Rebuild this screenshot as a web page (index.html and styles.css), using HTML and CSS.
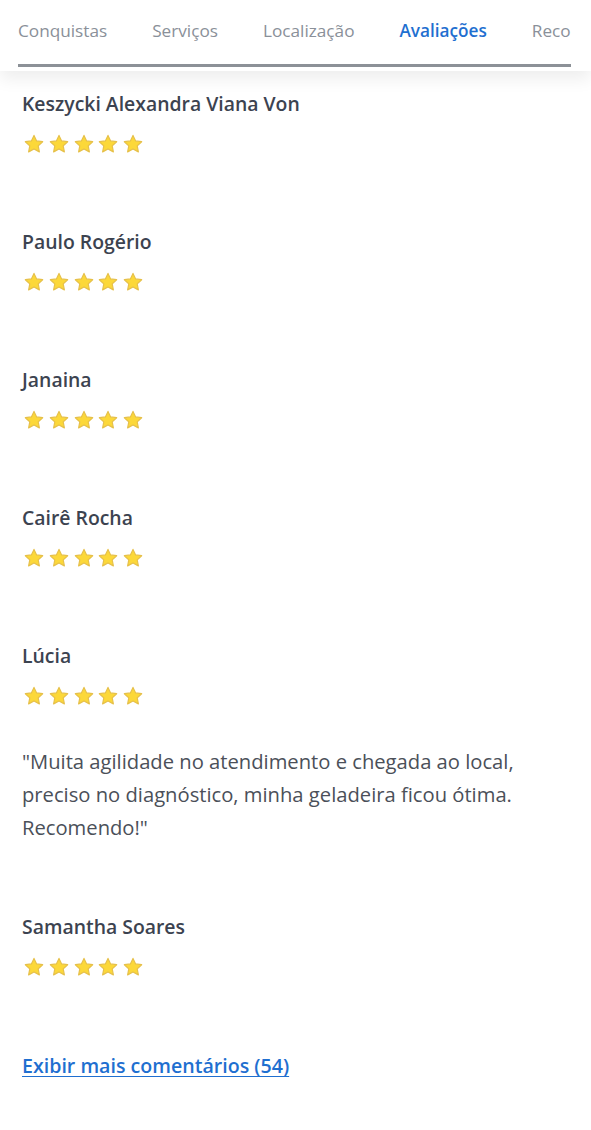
FILE: index.html
```html
<!DOCTYPE html>
<html lang="pt-BR">
<head>
<meta charset="utf-8">
<title>Avaliações</title>
<link rel="stylesheet" href="styles.css">
</head>
<body>
<svg class="defs" width="0" height="0" aria-hidden="true">
  <symbol id="star" viewBox="0 0 24 24">
    <path d="M12 2.6l2.85 6.05 6.6.85-4.85 4.55 1.25 6.55L12 17.4l-5.85 3.2 1.25-6.55L2.55 9.5l6.6-.85z" fill="#fcd839" stroke="#e6c04a" stroke-width="1.3" stroke-linejoin="round"/>
  </symbol>
</svg>
<header class="header">
  <nav class="tabs">
    <a class="tab">Conquistas</a>
    <a class="tab">Serviços</a>
    <a class="tab">Localização</a>
    <a class="tab active">Avaliações</a>
    <a class="tab">Recomendações</a>
  </nav>
</header>
<main class="reviews">
  <article class="review">
    <h3 class="name">Keszycki Alexandra Viana Von</h3>
    <div class="stars"><svg><use href="#star"/></svg><svg><use href="#star"/></svg><svg><use href="#star"/></svg><svg><use href="#star"/></svg><svg><use href="#star"/></svg></div>
  </article>
  <article class="review">
    <h3 class="name">Paulo Rogério</h3>
    <div class="stars"><svg><use href="#star"/></svg><svg><use href="#star"/></svg><svg><use href="#star"/></svg><svg><use href="#star"/></svg><svg><use href="#star"/></svg></div>
  </article>
  <article class="review">
    <h3 class="name">Janaina</h3>
    <div class="stars"><svg><use href="#star"/></svg><svg><use href="#star"/></svg><svg><use href="#star"/></svg><svg><use href="#star"/></svg><svg><use href="#star"/></svg></div>
  </article>
  <article class="review">
    <h3 class="name">Cairê Rocha</h3>
    <div class="stars"><svg><use href="#star"/></svg><svg><use href="#star"/></svg><svg><use href="#star"/></svg><svg><use href="#star"/></svg><svg><use href="#star"/></svg></div>
  </article>
  <article class="review">
    <h3 class="name">Lúcia</h3>
    <div class="stars"><svg><use href="#star"/></svg><svg><use href="#star"/></svg><svg><use href="#star"/></svg><svg><use href="#star"/></svg><svg><use href="#star"/></svg></div>
    <p class="text">"Muita agilidade no atendimento e chegada ao local, preciso no diagnóstico, minha geladeira ficou ótima. Recomendo!"</p>
  </article>
  <article class="review">
    <h3 class="name">Samantha Soares</h3>
    <div class="stars"><svg><use href="#star"/></svg><svg><use href="#star"/></svg><svg><use href="#star"/></svg><svg><use href="#star"/></svg><svg><use href="#star"/></svg></div>
  </article>
  <a class="more" href="#">Exibir mais comentários (54)</a>
</main>
</body>
</html>
```
FILE: styles.css
```css
* { box-sizing: border-box; }
html, body { margin: 0; padding: 0; background: #fff; }
body {
  font-family: "Open Sans", "Noto Sans", "Liberation Sans", sans-serif;
  color: #3c4350;
  width: 591px;
  overflow: hidden;
}
.defs { position: absolute; width: 0; height: 0; }

.header {
  background: #fff;
  padding-bottom: 4px;
  box-shadow: 0 8px 16px rgba(0, 0, 0, 0.07);
  position: relative;
}
.tabs {
  display: flex;
  margin: 0 20px 0 18px;
  border-bottom: 3px solid #8c9197;
  overflow: hidden;
}
.tab {
  flex-shrink: 0;
  padding: 19px 22.5px 21px;
  font-size: 17.2px;
  line-height: 24px;
  color: #8a9099;
  white-space: nowrap;
}
.tab:first-child { padding-left: 0; }
.tab.active {
  color: #1f6fd0;
  font-weight: 600;
  border-bottom: 3px solid #1f6fd0;
  margin-bottom: -3px;
}

.reviews {
  padding: 18px 22px 40px;
}
.review {
  padding-bottom: 72px;
}
.name {
  margin: 0;
  font-size: 19.4px;
  line-height: 30px;
  font-weight: 600;
  color: #3c4350;
}
.stars {
  display: flex;
  gap: 2.75px;
  margin-top: 14px;
  padding-left: 1px;
  height: 22px;
}
.stars svg {
  width: 22px;
  height: 22px;
}
.text {
  max-width: 520px;
  margin: 38px 0 -4px;
  font-size: 20.2px;
  line-height: 33px;
  color: #4b5059;
}
.more {
  display: inline-block;
  margin-top: 1px;
  font-size: 19.6px;
  line-height: 30px;
  font-weight: 600;
  color: #1f6fd0;
  text-decoration: underline;
  text-underline-offset: 3px;
}
```
